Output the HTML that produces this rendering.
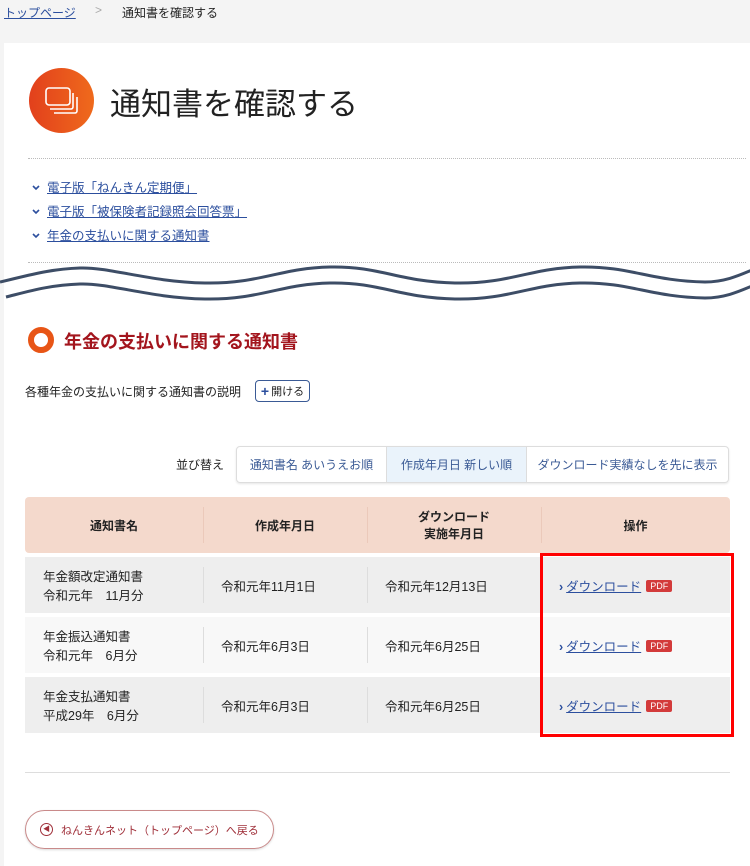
<!DOCTYPE html>
<html><head><meta charset="utf-8">
<style>
*{margin:0;padding:0;box-sizing:border-box}
body{width:750px;height:866px;background:#f4f4f4;font-family:"Liberation Sans","Noto Sans CJK JP",sans-serif;color:#222;position:relative;overflow:hidden}
.a{position:absolute}
a{color:#2c4f9e;text-decoration:underline}
.card{left:4px;top:43px;width:746px;height:823px;background:#fff}
.dot{border-top:1px dotted #bbb}
.links div{font-size:12.5px;height:24px;display:flex;align-items:center}
.links svg{margin-right:7px;margin-top:3px}
.sort{left:236px;top:446px;width:493px;height:37px;border:1px solid #ddd;border-radius:4px;display:flex;font-size:12px;color:#3a5a95;box-shadow:0 1px 2px rgba(0,0,0,.1)}
.sort div{display:flex;align-items:center;justify-content:center;border-right:1px solid #ddd}
table{position:absolute;left:25px;top:493px;width:705px;border-collapse:separate;border-spacing:0 4px;font-size:12.5px}
th{background:#f4d9cc;height:56px;font-size:12px;font-weight:bold;text-align:center}
td{height:56px;padding-left:18px}
tr.r1 td{background:#eee}tr.r2 td{background:#f8f8f8}
.sep{position:relative}
.sep:before{content:"";position:absolute;left:0;top:10px;bottom:10px;border-left:1px solid #ddd}
th.sep:before{border-left-color:#ebc9ba}
.pdf{display:inline-block;background:#d33b3b;color:#fff;font-size:9px;padding:1px 4px;border-radius:2px;margin-left:5px;vertical-align:2px}
.arr{color:#2c4f9e;font-weight:bold;margin-right:3px}
</style></head><body>
<div class="a" style="left:4px;top:4px;font-size:12px"><a href="#">トップページ</a></div>
<div class="a" style="left:95px;top:3px;font-size:12px;color:#aaa">&gt;</div>
<div class="a" style="left:122px;top:4px;font-size:12px">通知書を確認する</div>
<div class="a card"></div>
<div class="a" style="left:29px;top:68px;width:65px;height:65px;border-radius:50%;background:linear-gradient(90deg,#e2401c,#ef6a1c)"></div>
<svg class="a" style="left:29px;top:68px" width="65" height="65" viewBox="0 0 65 65" fill="none" stroke="#fff" stroke-width="1.6"><rect x="17" y="20" width="24" height="17" rx="3"/><path d="M44 25v14a2 2 0 0 1-2 2H21M48 29v14a2 2 0 0 1-2 2H25"/></svg>
<div class="a" style="left:110px;top:79px;font-size:31px;color:#222">通知書を確認する</div>
<div class="a dot" style="left:28px;top:158px;width:718px"></div>
<div class="a links" style="left:32px;top:174px">
<div><svg width="8" height="6" viewBox="0 0 8 6"><path d="M1 1l3 3 3-3" fill="none" stroke="#2c4f9e" stroke-width="1.6"/></svg><a href="#">電子版「ねんきん定期便」</a></div>
<div><svg width="8" height="6" viewBox="0 0 8 6"><path d="M1 1l3 3 3-3" fill="none" stroke="#2c4f9e" stroke-width="1.6"/></svg><a href="#">電子版「被保険者記録照会回答票」</a></div>
<div><svg width="8" height="6" viewBox="0 0 8 6"><path d="M1 1l3 3 3-3" fill="none" stroke="#2c4f9e" stroke-width="1.6"/></svg><a href="#">年金の支払いに関する通知書</a></div>
</div>
<div class="a dot" style="left:28px;top:262px;width:718px"></div>
<svg class="a" style="left:0;top:255px" width="750" height="50" viewBox="0 0 750 50" fill="none" stroke="#3d4d66" stroke-width="3"><path d="M0 27C30 20 50 14 80 13S150 27 205 28 280 13 330 12 400 27 455 28 530 13 580 12 650 26 705 27C725 27 740 20 752 15"/><path d="M6 42C30 36 50 30 80 29S150 43 205 44 280 29 330 28 400 43 455 44 530 29 580 28 650 42 705 43C725 43 740 36 752 31"/></svg>
<div class="a" style="left:28px;top:327px;width:26px;height:26px;border-radius:50%;border:6px solid #e85516"></div>
<div class="a" style="left:64px;top:328px;font-size:18px;font-weight:bold;color:#a3151d">年金の支払いに関する通知書</div>
<div class="a" style="left:25px;top:383px;font-size:12px">各種年金の支払いに関する通知書の説明</div>
<div class="a" style="left:255px;top:380px;width:55px;height:22px;border:1px solid #3a5a95;border-radius:4px;font-size:11px;display:flex;align-items:center;justify-content:center"><b style="color:#2c4f9e;font-size:14px;margin-right:2px">+</b>開ける</div>
<div class="a" style="left:176px;top:456px;font-size:12px">並び替え</div>
<div class="a sort"><div style="width:150px">通知書名 あいうえお順</div><div style="width:140px;background:#eaf3fb">作成年月日 新しい順</div><div style="flex:1;border:none">ダウンロード実績なしを先に表示</div></div>
<table>
<tr><th style="width:178px;border-radius:4px 0 0 4px">通知書名</th><th class="sep" style="width:164px">作成年月日</th><th class="sep" style="width:174px">ダウンロード<br>実施年月日</th><th class="sep" style="border-radius:0 4px 4px 0">操作</th></tr>
<tr class="r1"><td>年金額改定通知書<br>令和元年　11月分</td><td class="sep">令和元年11月1日</td><td class="sep">令和元年12月13日</td><td><span class="arr">›</span><a href="#">ダウンロード</a><span class="pdf">PDF</span></td></tr>
<tr class="r2"><td>年金振込通知書<br>令和元年　6月分</td><td class="sep">令和元年6月3日</td><td class="sep">令和元年6月25日</td><td><span class="arr">›</span><a href="#">ダウンロード</a><span class="pdf">PDF</span></td></tr>
<tr class="r1"><td>年金支払通知書<br>平成29年　6月分</td><td class="sep">令和元年6月3日</td><td class="sep">令和元年6月25日</td><td><span class="arr">›</span><a href="#">ダウンロード</a><span class="pdf">PDF</span></td></tr>
</table>
<div class="a" style="left:540px;top:553px;width:194px;height:184px;border:3px solid #f00"></div>
<div class="a" style="left:25px;top:772px;width:705px;border-top:1px solid #ddd"></div>
<div class="a" style="left:25px;top:810px;width:249px;height:39px;border:1px solid #c98a8a;border-radius:20px;box-shadow:0 1px 2px rgba(0,0,0,.15);font-size:11px;color:#a0303a;display:flex;align-items:center;padding-left:14px"><span style="display:inline-block;width:13px;height:13px;border:1px solid #a0303a;border-radius:50%;font-size:7px;text-align:center;line-height:11px;margin-right:8px">◀</span>ねんきんネット（トップページ）へ戻る</div>
</body></html>
